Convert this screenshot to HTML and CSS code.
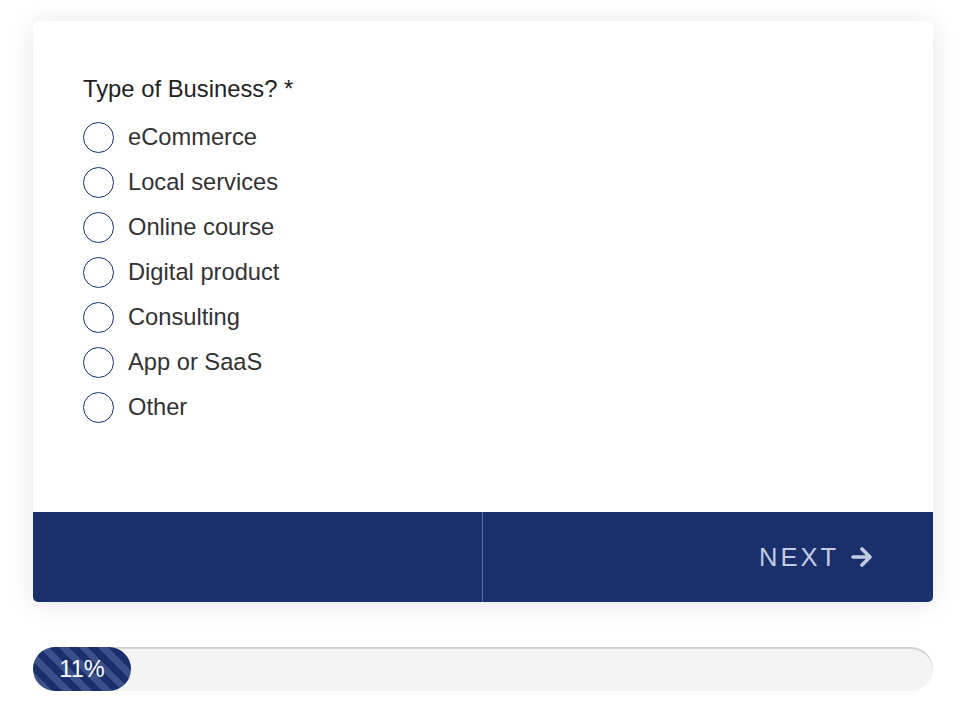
FILE: index.html
```html
<!DOCTYPE html>
<html>
<head>
<meta charset="utf-8">
<link rel="stylesheet" href="styles.css">
</head>
<body>
<div class="page">
  <div class="card">
    <div class="card-body">
      <div class="question">Type of Business? *</div>
      <div class="options">
        <label class="option"><span class="radio"></span><span class="opt-text">eCommerce</span></label>
        <label class="option"><span class="radio"></span><span class="opt-text">Local services</span></label>
        <label class="option"><span class="radio"></span><span class="opt-text">Online course</span></label>
        <label class="option"><span class="radio"></span><span class="opt-text">Digital product</span></label>
        <label class="option"><span class="radio"></span><span class="opt-text">Consulting</span></label>
        <label class="option"><span class="radio"></span><span class="opt-text">App or SaaS</span></label>
        <label class="option"><span class="radio"></span><span class="opt-text">Other</span></label>
      </div>
    </div>
    <div class="card-footer">
      <div class="footer-left"></div>
      <div class="footer-right">
        <span class="next">NEXT</span>
        <svg class="arrow" width="23" height="20" viewBox="0 0 23 20"><path d="M2 10 H19 M11 2 L19 10 L11 18" fill="none" stroke="currentColor" stroke-width="3.6" stroke-linecap="round" stroke-linejoin="round"/></svg>
      </div>
    </div>
  </div>
  <div class="progress">
    <div class="progress-fill"><span class="pct">11%</span></div>
  </div>
</div>
</body>
</html>
```

FILE: styles.css
```css
html, body {
  margin: 0;
  padding: 0;
  background: #ffffff;
}
body {
  font-family: "Liberation Sans", Arial, sans-serif;
}
.page {
  padding: 21px 36px 0 33px;
  width: 900px;
}
.card {
  width: 900px;
  background: #fff;
  border-radius: 5px;
  box-shadow: 0 2px 28px rgba(0, 0, 0, 0.10);
  overflow: hidden;
}
.card-body {
  height: 436px;
  padding: 55px 50px 0 50px;
}
.question {
  font-size: 23.8px;
  line-height: 26px;
  color: #222;
  margin-bottom: 13px;
}
.options {
  display: flex;
  flex-direction: column;
}
.option {
  display: flex;
  align-items: center;
  height: 45px;
}
.radio {
  width: 29px;
  height: 29px;
  border: 1.3px solid #1b2f6a;
  border-radius: 50%;
  box-sizing: content-box;
  flex: none;
}
.opt-text {
  margin-left: 14px;
  font-size: 23.7px;
  color: #333;
}
.card-footer {
  display: flex;
  height: 90px;
  background: #19306c;
}
.footer-left {
  width: 449px;
  border-right: 1px solid #5a6ea6;
}
.footer-right {
  flex: 1;
  display: flex;
  align-items: center;
  justify-content: flex-end;
  padding-right: 59px;
  color: #c3cbe2;
}
.next {
  font-size: 25.5px;
  letter-spacing: 3px;
  margin-right: 12px;
}
.arrow {
  display: block;
}
.progress {
  margin-top: 45px;
  height: 44px;
  border-radius: 22px;
  background: #f4f4f4;
  box-shadow: inset 0 2px 1px rgba(0, 0, 0, 0.14);
}
.progress-fill {
  width: 98px;
  height: 44px;
  border-radius: 22px;
  background: repeating-linear-gradient(45deg, #1a2f6b 0 7px, #3b5089 7px 14px);
  display: flex;
  align-items: center;
  justify-content: center;
}
.pct {
  color: #fff;
  font-size: 23.5px;
}
```
